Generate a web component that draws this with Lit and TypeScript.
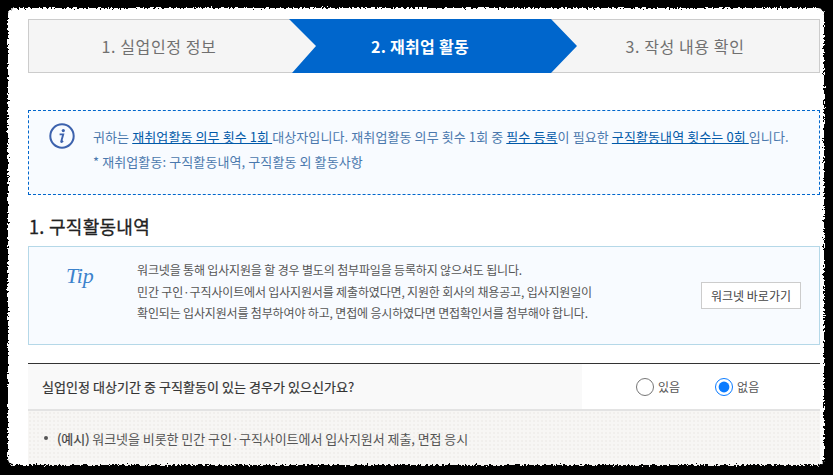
import { LitElement, html, css } from 'lit';
import { customElement, state } from 'lit/decorators.js';

/**
 * Job-seeking activity step of the unemployment certification form.
 */
@customElement('app-root')
export class AppRoot extends LitElement {
  static styles = css`
    :host {
      display: block;
      position: relative;
      width: 833px;
      height: 475px;
      overflow: hidden;
      background: #fff;
      font-family: 'Noto Sans CJK KR', 'Noto Sans', sans-serif;
      color: #555;
    }

    .page {
      display: flex;
      flex-direction: column;
      padding: 19px 13px 0 28px;
    }

    /* steps */
    .steps {
      display: flex;
      height: 54px;
      box-sizing: border-box;
      border: 1px solid #ccc;
      background: #f5f5f5;
      font-size: 16px;
      letter-spacing: 0.6px;
      color: #707070;
    }
    .step {
      display: flex;
      align-items: center;
      justify-content: center;
    }
    .step.first {
      width: 260px;
    }
    .step.current {
      width: 288px;
      margin: -1px -26px -1px 0;
      padding-right: 26px;
      box-sizing: border-box;
      background: #0066cc;
      clip-path: polygon(0 0, 262px 0, 288px 27px, 262px 54px, 3px 54px, 27px 27px);
      color: #fff;
      font-weight: 700;
      letter-spacing: 0.3px;
      position: relative;
    }
    .step.last {
      flex: 1;
    }

    /* notice */
    .notice {
      display: flex;
      height: 85px;
      box-sizing: border-box;
      margin-top: 37px;
      padding: 12px 0 0 20px;
      border: 1px dashed #0066cc;
      background: #f8fbff;
      font-size: 13px;
      letter-spacing: 0.1px;
      color: #4a78ad;
    }
    .notice svg {
      flex: none;
      margin: 0 18px 0 0;
    }
    .notice p {
      margin: 1px 0 0;
      line-height: 25px;
      white-space: nowrap;
    }
    .notice u {
      color: #0059a8;
    }

    h2 {
      margin: 19px 0 0 1px;
      font-size: 18px;
      line-height: 24px;
      font-weight: 400;
      letter-spacing: 0.3px;
      -webkit-text-stroke: 0.3px #222;
      color: #222;
    }

    /* tip */
    .tip {
      display: flex;
      align-items: center;
      height: 99px;
      box-sizing: border-box;
      margin-top: 8px;
      border: 1px solid #b5d8e8;
      background: #f8fbff;
      font-size: 12px;
      letter-spacing: -0.16px;
      color: #555;
    }
    .tip-mark {
      flex: none;
      align-self: flex-start;
      width: 108px;
      margin-top: 14px;
      padding-left: 37px;
      box-sizing: border-box;
      font: italic 22px/30px 'Liberation Serif', serif;
      color: #3c82cc;
    }
    .tip-text {
      flex: 1;
      margin: 0 0 8px;
      line-height: 21.5px;
      white-space: nowrap;
    }
    .tip button {
      width: 100px;
      height: 27px;
      margin-right: 18px;
      padding: 0;
      border: 1px solid #ccc;
      background: #fff;
      font: inherit;
      color: #444;
    }

    /* question */
    .question {
      display: flex;
      margin-top: 18px;
      border-top: 1px solid #333;
      border-bottom: 2px solid #e3e3e3;
    }
    .question-label {
      display: flex;
      align-items: center;
      width: 554px;
      height: 45px;
      box-sizing: border-box;
      padding-left: 14px;
      background: #f9f9f9;
      font-size: 13px;
      font-weight: 400;
      letter-spacing: 0.05px;
      -webkit-text-stroke: 0.2px #333;
      color: #333;
    }
    .options {
      display: flex;
      align-items: center;
      gap: 35px;
      padding-left: 54px;
      font-size: 12px;
      color: #555;
    }
    .options label {
      display: flex;
      align-items: center;
      gap: 4px;
    }
    .options input {
      width: 18px;
      height: 18px;
      margin: 0;
      accent-color: #0a7bff;
    }

    /* example */
    .example {
      display: flex;
      align-items: center;
      height: 60px;
      box-sizing: border-box;
      padding: 0 0 6px 16px;
      gap: 9px;
      background-color: #f7f6f4;
      background-image: radial-gradient(#f1efec 0.7px, transparent 0.8px);
      background-size: 4px 4px;
      font-size: 13px;
      letter-spacing: -0.06px;
      color: #555;
    }
    .example::before {
      content: '';
      width: 4px;
      height: 4px;
      border-radius: 50%;
      background: #555;
    }
    .example b {
      font-weight: 400;
      -webkit-text-stroke: 0.2px #444;
      color: #444;
    }

    /* torn black screenshot frame, lies over the page */
    .frame {
      position: absolute;
      inset: 0;
      pointer-events: none;
    }
  `;

  @state() private hasActivity = false;

  render() {
    return html`
      <div class="page">
        <div class="steps">
          <div class="step first">1. 실업인정 정보</div>
          <div class="step current">2. 재취업 활동</div>
          <div class="step last">3. 작성 내용 확인</div>
        </div>

        <div class="notice">
          <svg width="26" height="26" viewBox="0 0 26 26" fill="none">
            <circle cx="13" cy="13" r="11.7" stroke="#3d62ad" stroke-width="2" />
            <circle cx="14.3" cy="7.6" r="1.6" fill="#3d62ad" />
            <path d="M10.6 11.4h3.6l-2 7.2c-.1.5.4.6 1.9-.5" stroke="#3d62ad" stroke-width="1.9" />
          </svg>
          <p>
            귀하는 <u>재취업활동 의무 횟수 1회 </u>대상자입니다. 재취업활동 의무 횟수 1회 중
            <u>필수 등록</u>이 필요한 <u>구직활동내역 횟수는 0회 </u>입니다.<br />
            * 재취업활동: 구직활동내역, 구직활동 외 활동사항
          </p>
        </div>

        <h2>1. 구직활동내역</h2>

        <div class="tip">
          <div class="tip-mark">Tip</div>
          <p class="tip-text">
            워크넷을 통해 입사지원을 할 경우 별도의 첨부파일을 등록하지 않으셔도 됩니다.<br />
            민간 구인·구직사이트에서 입사지원서를 제출하였다면, 지원한 회사의 채용공고, 입사지원일이<br />
            확인되는 입사지원서를 첨부하여야 하고, 면접에 응시하였다면 면접확인서를 첨부해야 합니다.
          </p>
          <button>워크넷 바로가기</button>
        </div>

        <div class="question">
          <div class="question-label">실업인정 대상기간 중 구직활동이 있는 경우가 있으신가요?</div>
          <div class="options">
            <label>
              <input type="radio" name="activity" .checked=${this.hasActivity}
                @change=${() => (this.hasActivity = true)} />있음
            </label>
            <label>
              <input type="radio" name="activity" .checked=${!this.hasActivity}
                @change=${() => (this.hasActivity = false)} />없음
            </label>
          </div>
        </div>

        <div class="example"><span><b>(예시)</b> 워크넷을 비롯한 민간 구인·구직사이트에서 입사지원서 제출, 면접 응시</span></div>
      </div>

      <svg class="frame" width="833" height="475" viewBox="0 0 833 475">
        <defs>
          <filter id="torn" x="-5%" y="-5%" width="110%" height="110%">
            <feTurbulence type="fractalNoise" baseFrequency="0.45" numOctaves="2" seed="4" />
            <feDisplacementMap in="SourceGraphic" scale="6" xChannelSelector="R" yChannelSelector="G" />
            <feGaussianBlur stdDeviation="0.4" />
          </filter>
        </defs>
        <path filter="url(#torn)" fill-rule="evenodd" fill="#000"
          d="M-20-20H853V495H-20ZM14 8H818a6 6 0 0 1 6 6V459a6 6 0 0 1-6 6H14a6 6 0 0 1-6-6V14a6 6 0 0 1 6-6Z" />
      </svg>
    `;
  }
}
